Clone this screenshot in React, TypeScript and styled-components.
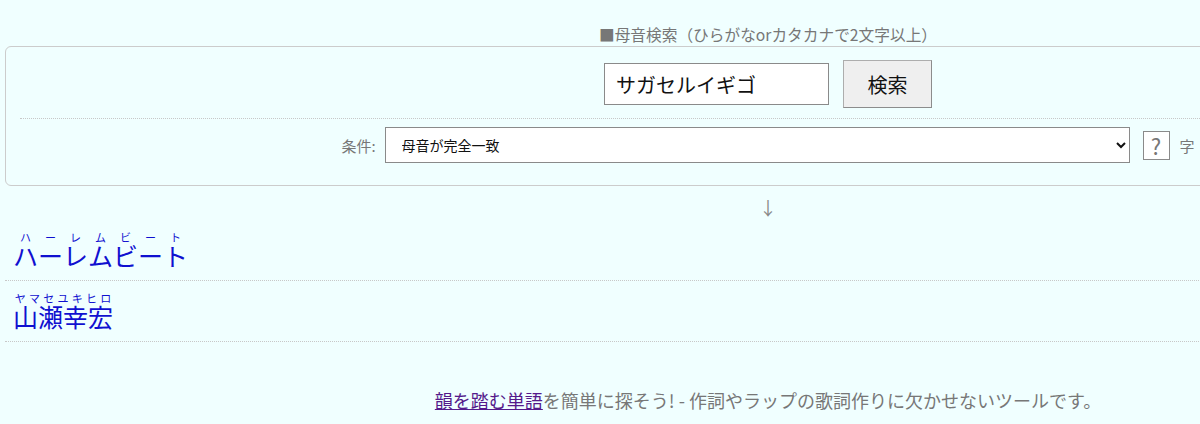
import { Fragment } from 'react';
import styled, { createGlobalStyle } from 'styled-components';

const GlobalStyle = createGlobalStyle`
    html, body {
        margin: 0;
        padding: 0;
        overflow: hidden;
        background: #f0ffff;
    }
    body {
        font-family: "Noto Sans CJK JP", "Noto Sans", sans-serif;
        color: #333;
    }
`;

type Reading = {
    readonly word: string;
    readonly kana: string;
    readonly perChar?: boolean;
};

const results: Reading[] = [
    { word: 'ハーレムビート', kana: 'ハーレムビート', perChar: true },
    { word: '山瀬幸宏', kana: 'ヤマセユキヒロ' },
];

const Page = styled.div`
    width: 1526px;
    margin: 0 5px;
`;

const Heading = styled.div`
    padding-top: 24px;
    text-align: center;
    font-size: 15.7px;
    line-height: 22px;
    color: #777;
`;

const SearchPanel = styled.form`
    border: 1px solid #ccc;
    border-radius: 6px;
    padding: 13px 14px 22px;
`;

const SearchRow = styled.div`
    display: flex;
    justify-content: center;
    align-items: center;
    gap: 14px;
    height: 48px;
`;

const WordInput = styled.input`
    box-sizing: border-box;
    width: 225px;
    height: 42px;
    padding: 0 11px;
    border: 1px solid #8a8a8a;
    background: #fff;
    font-family: inherit;
    font-size: 20px;
    color: #111;
`;

const SearchButton = styled.button`
    box-sizing: border-box;
    width: 89px;
    height: 48px;
    border: 1px solid #adadad;
    border-right-color: #8c8c8c;
    border-bottom-color: #8c8c8c;
    background: #efefef;
    font-family: inherit;
    font-size: 20px;
    color: #111;
`;

const DottedRule = styled.hr`
    margin: 10px 0 8px;
    border: 0;
    border-top: 1px dotted #c8c8c8;
`;

const OptionRow = styled.div`
    display: flex;
    justify-content: center;
    align-items: center;
    height: 36px;
    font-size: 15px;
    color: #777;
`;

const OptionLabel = styled.label`
    margin-right: 9px;
`;

const ModeSelect = styled.select`
    box-sizing: border-box;
    width: 745px;
    height: 36px;
    padding: 0 12px;
    border: 1px solid #8a8a8a;
    border-radius: 0;
    background: #fff;
    font-family: inherit;
    font-size: 14px;
    color: #111;
`;

const LengthInput = styled.input`
    box-sizing: border-box;
    width: 27px;
    height: 29px;
    margin-left: 13px;
    padding: 0;
    border: 1px solid #8a8a8a;
    background: #fff;
    text-align: center;
    font-family: inherit;
    font-size: 22px;

    &::placeholder {
        color: #777;
    }
`;

const Unit = styled.span`
    margin-left: 10px;
`;

const DownArrow = styled.div`
    margin-top: 8px;
    text-align: center;
    font-size: 18px;
    line-height: 26px;
    color: #888;
`;

const ResultRow = styled.div`
    box-sizing: border-box;
    height: 61px;
    padding: 0 8px 11px;
    display: flex;
    align-items: flex-end;
    border-bottom: 1px dotted #c8c8c8;

    &:first-of-type {
        height: 59px;
    }
`;

const Word = styled.ruby`
    font-size: 25px;
    line-height: 1.1;
    color: #1010d0;

    & rt {
        font-size: 11px;
        line-height: 1.1;
    }
`;

const Footer = styled.p`
    margin: 45px 0 0;
    text-align: center;
    font-size: 18px;
    color: #777;

    & a {
        color: #551a8b;
    }
`;

const Result = ({ word, kana, perChar }: Reading) => (
    <ResultRow>
        <Word>
            {perChar ? (
                [...word].map((ch, i) => (
                    <Fragment key={i}>
                        {ch}
                        <rt>{kana[i]}</rt>
                    </Fragment>
                ))
            ) : (
                <>
                    {word}
                    <rt>{kana}</rt>
                </>
            )}
        </Word>
    </ResultRow>
);

export default function App() {
    return (
        <>
            <GlobalStyle />
            <Page>
                <Heading>■母音検索（ひらがなorカタカナで2文字以上）</Heading>
                <SearchPanel onSubmit={(e) => e.preventDefault()}>
                    <SearchRow>
                        <WordInput defaultValue="サガセルイギゴ" />
                        <SearchButton type="submit">検索</SearchButton>
                    </SearchRow>
                    <DottedRule />
                    <OptionRow>
                        <OptionLabel htmlFor="selMode">条件:</OptionLabel>
                        <ModeSelect id="selMode" defaultValue="all">
                            <option value="all">母音が完全一致</option>
                            <option value="tail">母音が後方一致</option>
                            <option value="head">母音が前方一致</option>
                        </ModeSelect>
                        <LengthInput placeholder="?" />
                        <Unit>字</Unit>
                    </OptionRow>
                </SearchPanel>
                <DownArrow>↓</DownArrow>
                {results.map((r) => (
                    <Result key={r.word} {...r} />
                ))}
                <Footer>
                    <a href="#">韻を踏む単語</a>
                    を簡単に探そう! - 作詞やラップの歌詞作りに欠かせないツールです。
                </Footer>
            </Page>
        </>
    );
}
